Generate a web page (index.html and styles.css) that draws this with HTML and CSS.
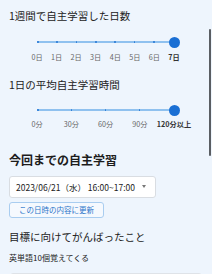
FILE: index.html
```html
<!DOCTYPE html>
<html lang="ja">
<head>
<meta charset="utf-8">
<link rel="stylesheet" href="styles.css">
</head>
<body>
<div class="page">
  <p class="q q-first">1週間で自主学習した日数</p>
  <div class="slider s1">
    <div class="track">
      <span class="tick"></span><span class="tick"></span><span class="tick"></span><span class="tick"></span>
      <span class="tick"></span><span class="tick"></span><span class="tick"></span><span class="tick"></span>
      <span class="thumb"></span>
    </div>
    <div class="labels">
      <span class="lab">0日</span><span class="lab">1日</span><span class="lab">2日</span><span class="lab">3日</span>
      <span class="lab">4日</span><span class="lab">5日</span><span class="lab">6日</span><span class="lab on">7日</span>
    </div>
  </div>

  <p class="q q-second">1日の平均自主学習時間</p>
  <div class="slider s2">
    <div class="track">
      <span class="tick"></span><span class="tick"></span><span class="tick"></span><span class="tick"></span><span class="tick"></span>
      <span class="thumb"></span>
    </div>
    <div class="labels">
      <span class="lab">0分</span><span class="lab">30分</span><span class="lab">60分</span><span class="lab">90分</span><span class="lab on">120分以上</span>
    </div>
  </div>

  <h2 class="heading">今回までの自主学習</h2>
  <div class="select">
    <span class="select-text">2023/06/21（水） 16:00~17:00</span>
    <span class="caret"></span>
  </div>
  <button class="update">この日時の内容に更新</button>

  <p class="q q-goal">目標に向けてがんばったこと</p>
  <p class="answer">英単語10個覚えてくる</p>
  <div class="box"></div>
</div>
<div class="scrollbar"></div>
</body>
</html>
```
FILE: styles.css
```css
html, body {
  margin: 0;
  padding: 0;
  background: #eef5fd;
  height: 274px;
  overflow: hidden;
}
body {
  font-family: "Noto Sans CJK JP", "Noto Sans", sans-serif;
  color: #222;
  position: relative;
}
.page {
  height: 274px;
  overflow: hidden;
  padding: 0 10px 0 9px;
  display: flex;
  flex-direction: column;
  align-items: flex-start;
}
.q {
  margin: 0;
  font-size: 10.5px;
  line-height: 14px;
  color: #222;
}
.q-first { margin-top: 9px; }
.q-second { margin-top: 16px; }
.q-goal { margin-top: 12px; }

.slider {
  align-self: stretch;
  display: flex;
  flex-direction: column;
  margin: 0 28px 0 28px;
}
.s1 { margin-top: 13px; }
.s2 { margin-top: 12px; }
.track {
  position: relative;
  height: 12px;
  display: flex;
  align-items: center;
  justify-content: space-between;
  background: linear-gradient(#8fc1ef, #8fc1ef) center / 100% 2px no-repeat;
}
.tick {
  width: 1.5px;
  height: 1.5px;
  background: #2f7ed6;
  border-radius: 50%;
}
.thumb {
  position: absolute;
  right: -5.5px;
  top: 0.5px;
  width: 11px;
  height: 11px;
  border-radius: 50%;
  background: #1a6fd4;
}
.labels {
  display: flex;
  justify-content: space-between;
  margin-top: 4px;
}
.s2 .labels { margin-top: 3px; }
.lab {
  width: 0;
  display: flex;
  justify-content: center;
  white-space: nowrap;
  font-size: 7.2px;
  line-height: 10px;
  color: #666;
}
.lab.on {
  color: #333;
  font-weight: bold;
}

.heading {
  margin: 23px 0 0 0;
  font-size: 12px;
  line-height: 16px;
  font-weight: bold;
  color: #1c1c1c;
}
.select {
  flex: none;
  margin-top: 7.5px;
  width: 147px;
  height: 22px;
  box-sizing: border-box;
  background: #fff;
  border: 1px solid #d9dde2;
  border-radius: 3px;
  display: flex;
  align-items: center;
  padding: 0 0 0 6px;
}
.select-text {
  font-size: 8.5px;
  color: #222;
  white-space: nowrap;
}
.caret {
  margin-left: 7px;
  width: 0;
  height: 0;
  border-left: 2.5px solid transparent;
  border-right: 2.5px solid transparent;
  border-top: 3px solid #777;
}
.update {
  flex: none;
  margin-top: 4.5px;
  width: 95px;
  height: 16px;
  padding: 0;
  box-sizing: border-box;
  background: #f5f9fe;
  border: 1px solid #a9cdf0;
  border-radius: 3px;
  color: #2a74c9;
  font-family: inherit;
  font-size: 7.5px;
  line-height: 14px;
}
.answer {
  margin: 8px 0 0 0;
  font-size: 8px;
  line-height: 11px;
  color: #222;
}
.box {
  flex: none;
  margin-top: 9.5px;
  margin-left: 1px;
  width: 192px;
  height: 30px;
  box-sizing: border-box;
  background: #fff;
  border: 1px solid #dfe3e8;
  border-radius: 3px;
}
.scrollbar {
  position: absolute;
  left: 209px;
  top: 29px;
  width: 2px;
  height: 127px;
  background: #5a5e63;
  border-radius: 1px;
}
```
